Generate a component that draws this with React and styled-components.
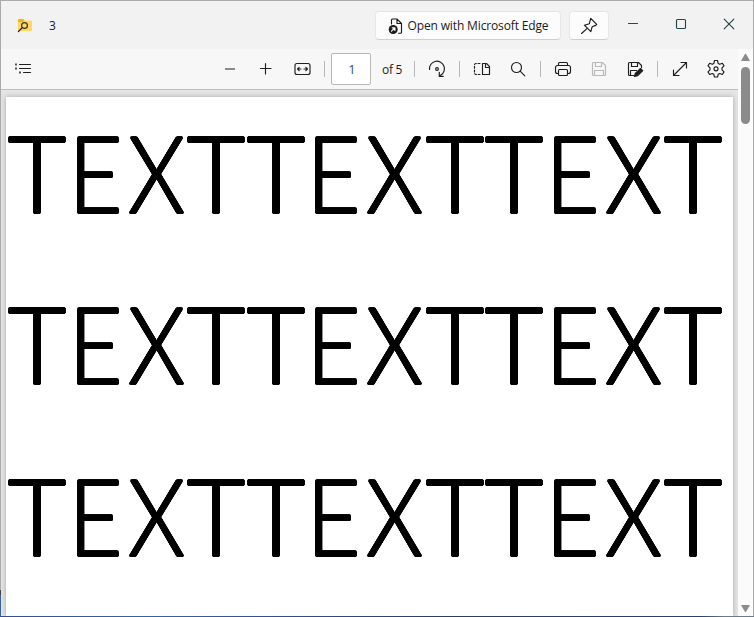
import React from 'react';
import styled, { createGlobalStyle } from 'styled-components';

const Global = createGlobalStyle`
  * { box-sizing: border-box; }
  body { margin: 0; overflow: hidden; background: #a9a9a9; }
`;

const Window = styled.div`
  width: 754px;
  height: 617px;
  display: flex;
  flex-direction: column;
  padding: 1px;
  background:
    linear-gradient(90deg, #34508a, #3465a0 20%, #34508a 35%, #2c3c60 60%, #2b406c 93%, #6d7a88 96%) bottom / 100% 1px no-repeat,
    linear-gradient(#aaa 590px, #443f44 590px, #443f44 595px, #3a62a2 595px) left / 1px 100% no-repeat,
    #ababab;
  color: #1b1b1b;
  font: 12px/16px 'Open Sans', 'Noto Sans', sans-serif;
  overflow: hidden;
`;

const TitleBar = styled.header`
  height: 48px;
  flex: none;
  display: flex;
  align-items: center;
  padding-left: 16px;
  background: #f2f2f2;
`;

const Title = styled.span`
  margin-left: 16px;
  padding-top: 1px;
  flex: 1;
`;

const TitleButton = styled.button`
  height: 29px;
  width: ${p => p.$width}px;
  margin: 1px 8px 0 0;
  padding: 0;
  display: flex;
  align-items: center;
  justify-content: center;
  gap: 4px;
  color: inherit;
  font: inherit;
  white-space: nowrap;
  background: #fcfcfc;
  border: 1px solid #e6e6e6;
  border-bottom-color: #cfcfcf;
  border-radius: 4px;
`;

const ButtonLabel = styled.span`
  letter-spacing: -0.14px;
`;

const CaptionButton = styled.button`
  width: 48px;
  height: 46px;
  padding: 0;
  border: 0;
  background: none;
  display: flex;
  align-items: center;
  justify-content: center;
  color: #24474b;
`;

const CaptionButtons = styled.div`
  display: flex;
  align-self: flex-start;
  margin-left: -8px;
`;

const Body = styled.div`
  flex: 1;
  min-height: 0;
  display: flex;
`;

const Viewer = styled.div`
  width: 737px;
  display: flex;
  flex-direction: column;
`;

const Toolbar = styled.nav`
  height: 41px;
  flex: none;
  display: flex;
  align-items: center;
  padding-left: 4px;
  background: #f7f7f7;
  border-bottom: 1px solid #bdbdbd;
`;

const ToolButton = styled.button`
  width: 36px;
  height: 36px;
  flex: none;
  padding: 0;
  border: 0;
  background: none;
  display: flex;
  align-items: center;
  justify-content: center;
  color: ${p => (p.$disabled ? '#b9b9b9' : '#1f1f1f')};
`;

const Spacer = styled.div`
  width: 171px;
  flex: none;
`;

const Divider = styled.i`
  width: 1px;
  height: 16px;
  flex: none;
  margin: 0 4px;
  background: #b8b8b8;
`;

const PageInput = styled.div`
  width: 40px;
  height: 32px;
  flex: none;
  margin-left: 2px;
  padding-left: 2px;
  border: 1px solid #b9b9b9;
  border-radius: 2px;
  background: #fff;
  color: #1a4a80;
  text-align: center;
  line-height: 32px;
`;

const PageCount = styled.span`
  width: 28px;
  flex: none;
  margin-left: 11px;
  padding-top: 1px;
  letter-spacing: -0.3px;
  white-space: nowrap;
`;

const Canvas = styled.main`
  flex: 1;
  min-height: 0;
  padding: 7px 5px 0;
  background: #e5e5e5;
  overflow: hidden;
`;

const Page = styled.article`
  height: 519px;
  padding-top: 15.5px;
  background: #fff;
  box-shadow: 0 0 5px rgba(0, 0, 0, 0.28);
`;

// A ring of solid shadows thickens the strokes and rounds their ends.
const ring = Array.from({ length: 16 }, (_, i) => {
  const angle = (i * Math.PI) / 8;
  return `${(1.25 * Math.cos(angle)).toFixed(2)}px ${(1.05 * Math.sin(angle)).toFixed(2)}px 0 #000`;
}).join(', ');

const Line = styled.p`
  display: flex;
  margin: 0;
  height: 171.8px;
  padding-left: 1.3px;
  color: #000;
  font-family: Lato, sans-serif;
  font-weight: 300;
  font-size: 105.7px;
  line-height: 120px;
  text-shadow: ${ring};
`;

const letterMetrics = {
  T: { width: 59.5, scale: 0.945, shift: 0.2 },
  E: { width: 59.2, scale: 0.875, shift: -1.1 },
  X: { width: 60.2, scale: 0.86, shift: 0.4 },
};

const Letter = styled.span`
  display: flex;
  justify-content: center;
  flex: none;
  width: ${p => letterMetrics[p.$char].width}px;
  transform: translateX(${p => letterMetrics[p.$char].shift}px) scaleX(${p => letterMetrics[p.$char].scale});
`;

const ScrollBar = styled.aside`
  width: 15px;
  display: flex;
  flex-direction: column;
  align-items: center;
  justify-content: space-between;
  padding: 4px 0 3px;
  background: #fbfbfb;
`;

const ScrollTop = styled.div`
  display: flex;
  flex-direction: column;
  align-items: center;
`;

const Thumb = styled.div`
  width: 9px;
  height: 57px;
  margin-top: 5px;
  border-radius: 5px;
  background: #8b8b8b;
`;

const Svg = styled.svg`
  display: block;
  flex: none;
  fill: none;
  stroke: currentColor;
  stroke-width: 1.15;
  stroke-linecap: round;
  stroke-linejoin: round;
`;

const Icon = ({ size = 20, children }) => (
  <Svg width={size} height={size} viewBox={`0 0 ${size} ${size}`}>{children}</Svg>
);

const FolderIcon = () => (
  <Icon size={16}>
    <path d="M1 13V3a1 1 0 0 1 1-1h4l1.5 1.5H14a1 1 0 0 1 1 1V13a1 1 0 0 1-1 1H2a1 1 0 0 1-1-1z" fill="#ffd769" stroke="none" />
    <path d="M1 5V3a1 1 0 0 1 1-1h4l1.5 1.5L6 5z" fill="#f5b50c" stroke="none" />
    <circle cx="7.5" cy="8.5" r="2.9" stroke="#3c3218" strokeWidth="1.2" />
    <path d="M5.2 10.8 1.4 14.5" stroke="#222" strokeWidth="1.2" />
  </Icon>
);

const EdgeFileIcon = () => (
  <Icon size={16}>
    <path d="M3.5 6V2a1 1 0 0 1 1-1H9l4.5 4.5V14a1 1 0 0 1-1 1.2h-2M9 1v4.5h4.5" />
    <circle cx="5.2" cy="11.5" r="4.5" fill="#1b1b1b" stroke="none" />
    <path d="m3.5 13.2 3.3-3.3M4.2 9.8h2.7v2.7" stroke="#fff" />
  </Icon>
);

const PinIcon = () => (
  <Icon>
    <path d="m11.7 2.3 6 6-1 1.1-3.5 1.3-1.4 4.900-6.400-6.400 5-1.500zM8.400 12.200 2.600 17.500" />
  </Icon>
);

const ListIcon = () => (
  <Icon>
    <path d="M6.5 5.5h11M6.5 9.5h11M10.5 13.5h7" />
    <path d="M2 5.5h2M2 9.5h2M6 13.5h2" strokeWidth="2" strokeLinecap="butt" stroke="#555" />
  </Icon>
);

const RotateIcon = () => (
  <Icon>
    <path d="M2.5 10.5A7.5 7.5 0 1 1 14 16l-1.5 1M12.3 13.3v4h4" />
    <circle cx="10" cy="10" r="1.4" />
  </Icon>
);

const SaveBody = () => (
  <path d="M3.5 4.5a1 1 0 0 1 1-1h9l3 3v9a1 1 0 0 1-1 1h-11a1 1 0 0 1-1-1zM6.5 3.5v4h6v-4M5.5 16.5v-5h9v5" />
);

const lines = ['TEXTTEXTTEXT', 'TEXTTEXTTEXT', 'TEXTTEXTTEXT'];

export default function App() {
  return (
    <>
      <Global />
      <Window>
        <TitleBar>
          <FolderIcon />
          <Title>3</Title>
          <TitleButton $width={186}>
            <EdgeFileIcon />
            <ButtonLabel>Open with Microsoft Edge</ButtonLabel>
          </TitleButton>
          <TitleButton $width={40} aria-label="Pin"><PinIcon /></TitleButton>
          <CaptionButtons>
            <CaptionButton><Icon size={12}><path d="M1.5 5.5h9" /></Icon></CaptionButton>
            <CaptionButton><Icon size={12}><rect x="1.5" y="1.5" width="9" height="9" rx="1" /></Icon></CaptionButton>
            <CaptionButton><Icon size={12}><path d="m1.2 1.2 9.6 9.6M10.8 1.2l-9.6 9.6" /></Icon></CaptionButton>
          </CaptionButtons>
        </TitleBar>
        <Body>
          <Viewer>
            <Toolbar>
              <ToolButton><ListIcon /></ToolButton>
              <Spacer />
              <ToolButton><Icon><path d="M5 10h10" stroke="#8b8b8b" strokeWidth="2" strokeLinecap="butt" /></Icon></ToolButton>
              <ToolButton><Icon><path d="M4.5 9.5h10.5M9.500 4.500v10.500" /></Icon></ToolButton>
              <ToolButton>
                <Icon>
                  <rect x="3" y="4.5" width="15" height="11" rx="2" />
                  <path d="M5.5 10H9M12 10h3.5M7.2 8.300 5.500 10l1.700 1.700M13.800 8.300l1.700 1.700-1.700 1.700" />
                </Icon>
              </ToolButton>
              <Divider />
              <PageInput>1</PageInput>
              <PageCount>of 5</PageCount>
              <Divider />
              <ToolButton><RotateIcon /></ToolButton>
              <Divider />
              <ToolButton>
                <Icon>
                  <path d="M10.5 4.5h4l3 3v8h-7zM13.5 4.5v4h4" />
                  <path d="M8 4.5H4a1.5 1.5 0 0 0-1.5 1.5v8A1.5 1.5 0 0 0 4 15.5h4" strokeDasharray="2 1.7" />
                </Icon>
              </ToolButton>
              <ToolButton><Icon><circle cx="8.5" cy="8.5" r="5" /><path d="m12.2 12.2 4.6 4.6" /></Icon></ToolButton>
              <Divider />
              <ToolButton>
                <Icon>
                  <path d="M5.5 6.5V4.5a1 1 0 0 1 1-1h7a1 1 0 0 1 1 1v2M5.500 14.500h-1a2 2 0 0 1-2-2v-4a2 2 0 0 1 2-2h11a2 2 0 0 1 2 2v4a2 2 0 0 1-2 2h-1" />
                  <rect x="5.5" y="10.5" width="9" height="6" rx="1" />
                </Icon>
              </ToolButton>
              <ToolButton $disabled><Icon><SaveBody /></Icon></ToolButton>
              <ToolButton>
                <Icon>
                  <path d="M9 16.5H4.5a1 1 0 0 1-1-1v-11a1 1 0 0 1 1-1h9l3 3v2M6.500 3.500v4h6v-4M5.500 16.500v-5h6" />
                  <path d="m9.5 17.5.8-3.2 5.200-4.800 2.200 2.200-5 5z" fill="currentColor" />
                </Icon>
              </ToolButton>
              <Divider />
              <ToolButton><Icon><path d="m3.5 16.5 13-13M11 3.500h5.500V9M3.500 11v5.500H9" /></Icon></ToolButton>
              <ToolButton>
                <Icon>
                  <path d="M8.5 1.5h3l.7 3 1.500.8 2.700-1 1.600 2.600-2 2v2l2 2-1.600 2.600-2.700-1-1.500.8-.7 2.700h-3l-.7-2.700-1.500-.8-2.700 1L2 12.900l2-2v-2l-2-2 1.600-2.600 2.700 1 1.500-.8z" />
                  <circle cx="10" cy="9.8" r="2" />
                </Icon>
              </ToolButton>
            </Toolbar>
            <Canvas>
              <Page>
                {lines.map((text, row) => (
                  <Line key={row}>
                    {[...text].map((char, i) => <Letter key={i} $char={char}>{char}</Letter>)}
                  </Line>
                ))}
              </Page>
            </Canvas>
          </Viewer>
          <ScrollBar>
            <ScrollTop>
              <Icon size={9}><path d="M4.5 1.2 8.2 7.5H.8z" fill="#8b8b8b" stroke="#8b8b8b" /></Icon>
              <Thumb />
            </ScrollTop>
            <Icon size={9}><path d="M.8 1.5h7.4L4.5 7.500z" fill="#8b8b8b" stroke="#8b8b8b" /></Icon>
          </ScrollBar>
        </Body>
      </Window>
    </>
  );
}
